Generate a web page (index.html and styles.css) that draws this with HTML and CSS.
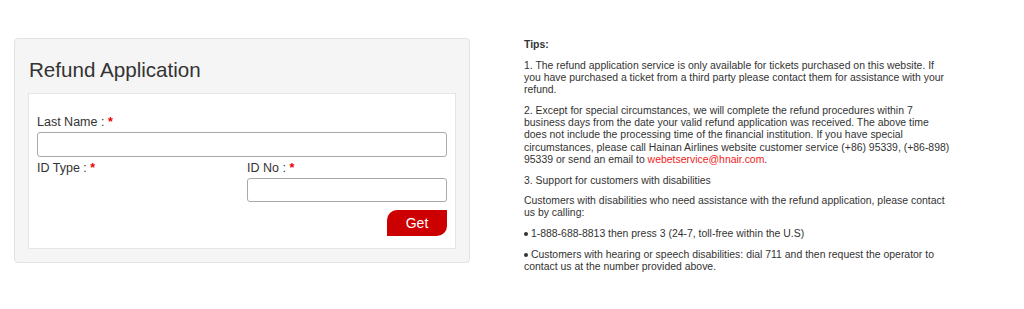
FILE: index.html
```html
<!DOCTYPE html>
<html>
<head>
<meta charset="utf-8">
<link rel="stylesheet" href="styles.css">
</head>
<body>
<div class="page">
  <div class="panel">
    <h2 class="title">Refund Application</h2>
    <div class="form-box">
      <div class="field">
        <label class="label">Last Name : <span class="req">*</span></label>
        <div class="input"></div>
      </div>
      <div class="row">
        <div class="field col">
          <label class="label">ID Type : <span class="req">*</span></label>
        </div>
        <div class="field col">
          <label class="label">ID No : <span class="req">*</span></label>
          <div class="input input-sm"></div>
        </div>
      </div>
      <div class="actions">
        <button class="btn">Get</button>
      </div>
    </div>
  </div>
  <div class="tips">
    <p class="tips-title">Tips:</p>
    <p>1. The refund application service is only available for tickets purchased on this website. If you have purchased a ticket from a third party please contact them for assistance with your refund.</p>
    <p>2. Except for special circumstances, we will complete the refund procedures within 7 business days from the date your valid refund application was received. The above time does not include the processing time of the financial institution. If you have special circumstances, please call Hainan Airlines website customer service (+86) 95339, <span class="nw">(+86-898)</span> 95339 or send an email to <span class="mail">webetservice@hnair.com</span>.</p>
    <p>3. Support for customers with disabilities</p>
    <p>Customers with disabilities who need assistance with the refund application, please contact us by calling:</p>
    <p><span class="dot"></span> 1-888-688-8813 then press 3 (24-7, toll-free within the U.S)</p>
    <p><span class="dot"></span> Customers with hearing or speech disabilities: dial 711 and then request the operator to contact us at the number provided above.</p>
  </div>
</div>
</body>
</html>
```
FILE: styles.css
```css
* { box-sizing: border-box; }
html, body { margin: 0; padding: 0; background: #fff; }
body { font-family: "Liberation Sans", Arial, sans-serif; color: #333; }
.page {
  display: flex;
  align-items: flex-start;
  padding: 38px 0 0 14px;
  gap: 54px;
}
.panel {
  width: 456px;
  background: #f5f5f5;
  border: 1px solid #e2e2e2;
  border-radius: 4px;
  padding: 0 13px 13px 13px;
}
.title {
  margin: 19px 0 11px 1px;
  font-size: 20.6px;
  line-height: 24px;
  font-weight: normal;
  color: #333;
}
.form-box {
  background: #fff;
  border: 1px solid #e6e6e6;
  padding: 21px 8px 12px 8px;
}
.label {
  display: block;
  font-size: 12.5px;
  line-height: 15px;
  color: #333;
}
.req { color: #e00; font-weight: bold; }
.input {
  margin-top: 2px;
  height: 25px;
  border: 1px solid #a9a9a9;
  border-radius: 3px;
  background: #fff;
}
.input-sm { height: 24px; margin-top: 2px; }
.row {
  display: grid;
  grid-template-columns: 1fr 200px;
  column-gap: 10px;
  margin-top: 4px;
}
.actions {
  display: flex;
  justify-content: flex-end;
  margin-top: 8px;
}
.btn {
  width: 60px;
  height: 26px;
  border: 0;
  padding: 0;
  background: #cc0000;
  color: #fff;
  font-family: "Liberation Sans", Arial, sans-serif;
  font-size: 14px;
  border-radius: 10px 0 10px 0;
}
.tips {
  width: 427px;
  padding-top: 1px;
  font-size: 10.45px;
  line-height: 12.3px;
  color: #333;
}
.tips p { margin: 0 0 8.3px 0; }
.tips .tips-title { font-weight: bold; }
.nw { white-space: nowrap; }
.mail { color: #f01c1c; }
.dot {
  display: inline-block;
  width: 4px;
  height: 4px;
  border-radius: 50%;
  background: #333;
  vertical-align: 1px;
}
```
